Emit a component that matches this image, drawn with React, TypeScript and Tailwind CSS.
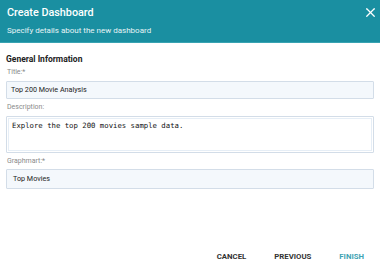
import { X } from 'lucide-react';

export default function App() {
  return (
    <div className="w-[380px] h-[269px] bg-white flex flex-col font-['Roboto',sans-serif] overflow-hidden">
      <header className="h-[43px] shrink-0 bg-[#1a8fa1] border-b border-[#38a3b2] pl-[7px] pr-[2px] text-white flex justify-between items-start">
        <div className="pt-[6px]">
          <h1 className="text-[10.8px] font-medium leading-[14px]">Create Dashboard</h1>
          <p className="text-[8px] leading-[10px] mt-[6px] text-[#e6f4f6]">Specify details about the new dashboard</p>
        </div>
        <button className="mt-[5px] text-white">
          <X className="w-[15px] h-[15px]" strokeWidth={2} />
        </button>
      </header>

      <main className="px-[6px] pt-[11px] flex flex-col">
        <h2 className="text-[8.5px] font-bold text-[#222] leading-[10px]">General Information</h2>

        <label className="text-[7px] text-[#8a8a8a] leading-[9px] mt-[4px] pl-[1px]">Title:*</label>
        <div className="mt-[4px] h-[18px] bg-[#f4f8fc] border border-[#d3dde8] rounded-[1px] flex items-center px-[4px] text-[7.2px] text-[#222]">
          Top 200 Movie Analysis
        </div>

        <label className="text-[7px] text-[#8a8a8a] leading-[9px] mt-[4px] pl-[1px]">Description:</label>
        <div className="mt-[4px] h-[37px] bg-white border border-[#d3dde8] rounded-[1px] p-[1px]">
          <div className="h-full border border-[#e6eef6] px-[3px] pt-[2px] text-[7.3px] leading-[10px] text-[#111] font-['DejaVu_Sans_Mono',monospace]">
            Explore the top 200 movies sample data.
          </div>
        </div>

        <label className="text-[7px] text-[#8a8a8a] leading-[9px] mt-[4px] pl-[1px]">Graphmart:*</label>
        <div className="mt-[3px] h-[20px] bg-[#f4f8fc] border border-[#d3dde8] rounded-[1px] flex items-center px-[6px] text-[7.2px] text-[#222]">
          Top Movies
        </div>
      </main>

      <footer className="mt-auto h-[24px] shrink-0 flex items-center justify-end pr-[16px] gap-[28px] text-[7.8px] font-bold">
        <button className="text-[#333]">CANCEL</button>
        <button className="text-[#333]">PREVIOUS</button>
        <button className="text-[#3fa3b3]">FINISH</button>
      </footer>
    </div>
  );
}
